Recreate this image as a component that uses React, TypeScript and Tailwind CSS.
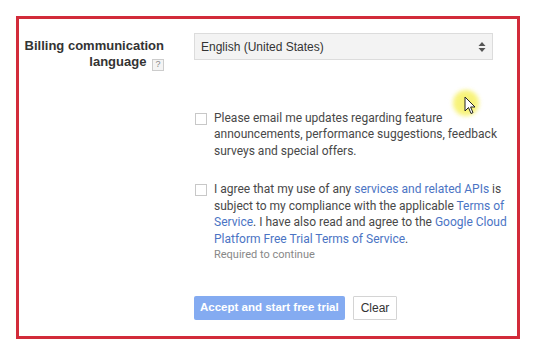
import React from 'react';

const Checkbox: React.FC = () => (
  <span className="mt-[3px] block h-[12px] w-[12px] shrink-0 border border-[#c8c8c8] bg-white" />
);

const App: React.FC = () => {
  return (
    <div className="relative h-[363px] w-[551px] bg-white p-[16px] font-['Roboto','Liberation_Sans',sans-serif] text-[#333]">
      <div className="h-[323px] w-[504px] border-[3px] border-[#d22b3a] pt-[14px]">

        {/* Language row */}
        <div className="flex">
          <div className="w-[145px] pt-[5px] text-right font-['Liberation_Sans',sans-serif] text-[13px] font-bold leading-[16px] text-[#333]">
            Billing communication
            <br />
            language{' '}
            <span className="ml-[2px] inline-flex h-[12px] w-[12px] items-center justify-center border border-[#ccc] bg-[#f4f4f4] align-[-1px] text-[9px] font-normal leading-none text-[#888]">
              ?
            </span>
          </div>
          <div className="ml-[30px] flex h-[27px] w-[299px] items-center justify-between border border-[#dcdcdc] bg-[#f3f3f3] pl-[6px] pr-[6px] font-['Liberation_Sans',sans-serif] text-[12px] text-[#333]">
            <span>English (United States)</span>
            <svg width="8" height="12" viewBox="0 0 8 12">
              <path d="M4 1 L7.5 5 H0.5 Z" fill="#555" />
              <path d="M4 11 L7.5 7 H0.5 Z" fill="#555" />
            </svg>
          </div>
        </div>

        {/* Checkboxes */}
        <div className="ml-[176px] mt-[39px] flex gap-[7px] text-[12px] leading-[16.5px] text-[#484848]">
          <Checkbox />
          <p className="w-[296px]">
            Please email me updates regarding feature announcements, performance suggestions, feedback surveys and special offers.
          </p>
        </div>

        <div className="ml-[176px] mt-[22px] flex gap-[7px] text-[12px] leading-[16.5px] text-[#484848]">
          <Checkbox />
          <div className="w-[296px]">
            <p>
              I agree that my use of any <a className="text-[#4b74c4]">services and related APIs</a> is subject to my compliance with the applicable <a className="text-[#4b74c4]">Terms of Service</a>. I have also read and agree to the <a className="text-[#4b74c4]">Google Cloud Platform Free Trial Terms of Service</a>.
            </p>
            <p className="text-[11px] leading-[15px] text-[#888]">Required to continue</p>
          </div>
        </div>

        {/* Buttons */}
        <div className="ml-[175px] mt-[34px] flex gap-[8px]">
          <button className="h-[24px] rounded-[2px] bg-[#84abf1] px-[6px] font-['Liberation_Sans',sans-serif] text-[11.5px] font-bold text-white">
            Accept and start free trial
          </button>
          <button className="h-[24px] rounded-[1px] border border-[#d4d4d4] bg-white px-[7px] font-['Liberation_Sans',sans-serif] text-[12px] text-[#333]">
            Clear
          </button>
        </div>
      </div>

      {/* Cursor highlight */}
      <div className="pointer-events-none absolute left-[453px] top-[90px] h-[26px] w-[26px] rounded-full bg-[#f6f05a] opacity-80 blur-[2px]" />
      <svg className="pointer-events-none absolute left-[464px] top-[96px]" width="12" height="19" viewBox="0 0 12 19">
        <path d="M1 1 L1 15 L4.5 11.5 L7 17.5 L9 16.6 L6.6 11 L11 11 Z" fill="white" stroke="#222" strokeWidth="1" strokeLinejoin="round" />
      </svg>
    </div>
  );
};

export default App;
